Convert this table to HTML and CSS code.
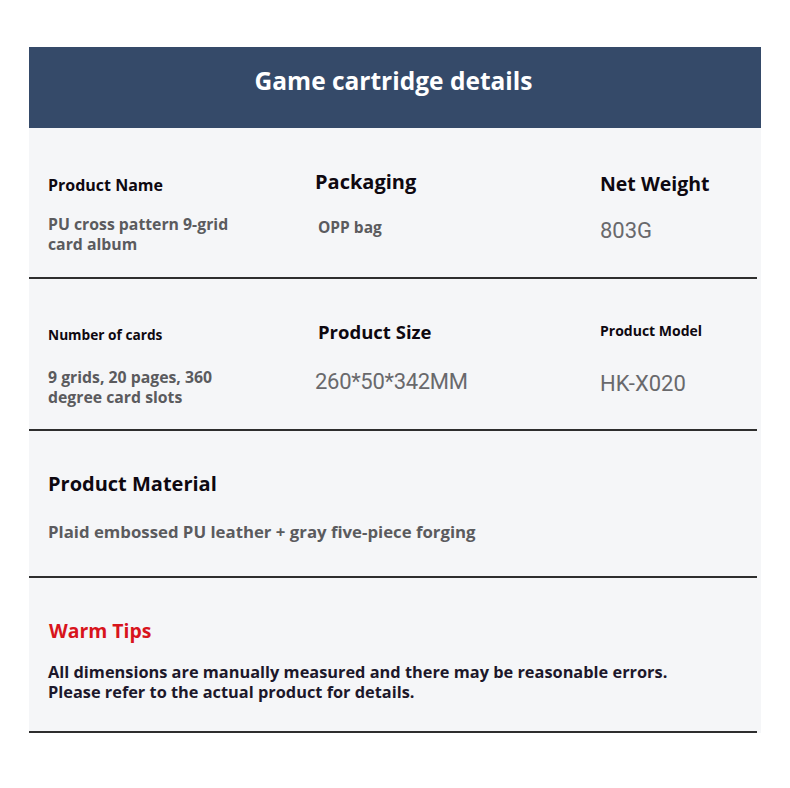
FILE: index.html
```html
<!DOCTYPE html>
<html lang="en">
<head>
<meta charset="utf-8">
<title>Game cartridge details</title>
<link rel="stylesheet" href="styles.css">
</head>
<body>
<div class="panel">
  <header class="header"><h1 class="title">Game cartridge details</h1></header>
  <div class="body">
    <section class="sec sec-1">
      <div class="h h-name">Product Name</div>
      <div class="h h-pack">Packaging</div>
      <div class="h h-weight">Net Weight</div>
      <div class="v v-name"><div>PU cross pattern 9-grid</div><div>card album</div></div>
      <div class="v v-pack">OPP bag</div>
      <div class="n n-weight">803G</div>
    </section>
    <div class="rule"></div>
    <section class="sec sec-2">
      <div class="h h-count">Number of cards</div>
      <div class="h h-size">Product Size</div>
      <div class="h h-model">Product Model</div>
      <div class="v v-count"><div>9 grids, 20 pages, 360</div><div>degree card slots</div></div>
      <div class="n n-size">260*50*342MM</div>
      <div class="n n-model">HK-X020</div>
    </section>
    <div class="rule"></div>
    <section class="sec-wide sec-3">
      <div class="h h-mat">Product Material</div>
      <div class="v v-mat">Plaid embossed PU leather + gray five-piece forging</div>
    </section>
    <div class="rule"></div>
    <section class="sec-wide sec-4">
      <div class="h h-tips">Warm Tips</div>
      <div class="tips-text"><div>All dimensions are manually measured and there may be reasonable errors.</div><div>Please refer to the actual product for details.</div></div>
    </section>
    <div class="rule"></div>
  </div>
</div>
</body>
</html>
```
FILE: styles.css
```css
html, body {
  margin: 0;
  padding: 0;
  background: #ffffff;
}

body {
  font-family: "Open Sans", "Noto Sans", sans-serif;
}

.panel {
  width: 732px;
  margin: 47px 0 0 29px;
}

.header {
  height: 81px;
  background: #354a69;
  box-sizing: border-box;
  padding-top: 19px;
}

.title {
  margin: 0;
  text-align: center;
  color: #ffffff;
  font-weight: 700;
  font-size: 24.5px;
  line-height: 1.2;
  padding-right: 3px;
}

.body {
  background: #f5f6f8;
}

.rule {
  height: 2px;
  margin-right: 4px;
  background: #2e2e2e;
}

.sec {
  box-sizing: border-box;
  display: grid;
  grid-template-columns: 267px 285px 1fr;
  grid-template-rows: 50px auto;
  align-items: start;
  padding: 32px 0 0 19px;
}

.sec-1 { height: 149px; }
.sec-2 { height: 150px; }

.sec-wide {
  box-sizing: border-box;
  display: flex;
  flex-direction: column;
  align-items: flex-start;
  padding-left: 19px;
}

.sec-3 { height: 145px; padding-top: 40px; }
.sec-4 { height: 153px; padding-top: 41px; }

.h {
  font-weight: 700;
  color: #0e0810;
  line-height: 1.2;
  white-space: nowrap;
}

.v {
  font-weight: 700;
  color: #5b5b5e;
  white-space: nowrap;
}

.n {
  font-family: "Roboto", "Open Sans", sans-serif;
  font-weight: 400;
  color: #69696c;
  line-height: 1.2;
  white-space: nowrap;
}

/* section 1 */
.h-name { font-size: 16px; margin-top: 16px; }
.h-pack { font-size: 20px; margin-top: 10px; }
.h-weight { font-size: 19.5px; margin-top: 12px; }
.v-name { font-size: 15.8px; line-height: 20px; margin-top: 3.5px; }
.v-pack { font-size: 15.5px; line-height: 1.2; margin-top: 8px; margin-left: 3px; }
.n-weight { font-size: 22px; margin-top: 8px; }

/* section 2 */
.h-count { font-size: 13.7px; margin-top: 16px; }
.h-size { font-size: 18.5px; margin-top: 10px; margin-left: 3px; }
.h-model { font-size: 14px; margin-top: 12px; }
.v-count { font-size: 15.8px; line-height: 20px; margin-top: 5.5px; }
.n-size { font-size: 22px; letter-spacing: -0.3px; margin-top: 8px; }
.n-model { font-size: 22px; margin-top: 10px; }

/* section 3 */
.h-mat { font-size: 20px; margin-top: 1px; }
.v-mat { font-size: 16.8px; line-height: 1.2; margin-top: 26px; }

/* section 4 */
.h-tips { font-size: 19.4px; color: #d8141c; margin-left: 1px; }
.tips-text {
  font-weight: 700;
  font-size: 16.35px;
  line-height: 20px;
  color: #1d182b;
  margin-top: 20px;
}
```
